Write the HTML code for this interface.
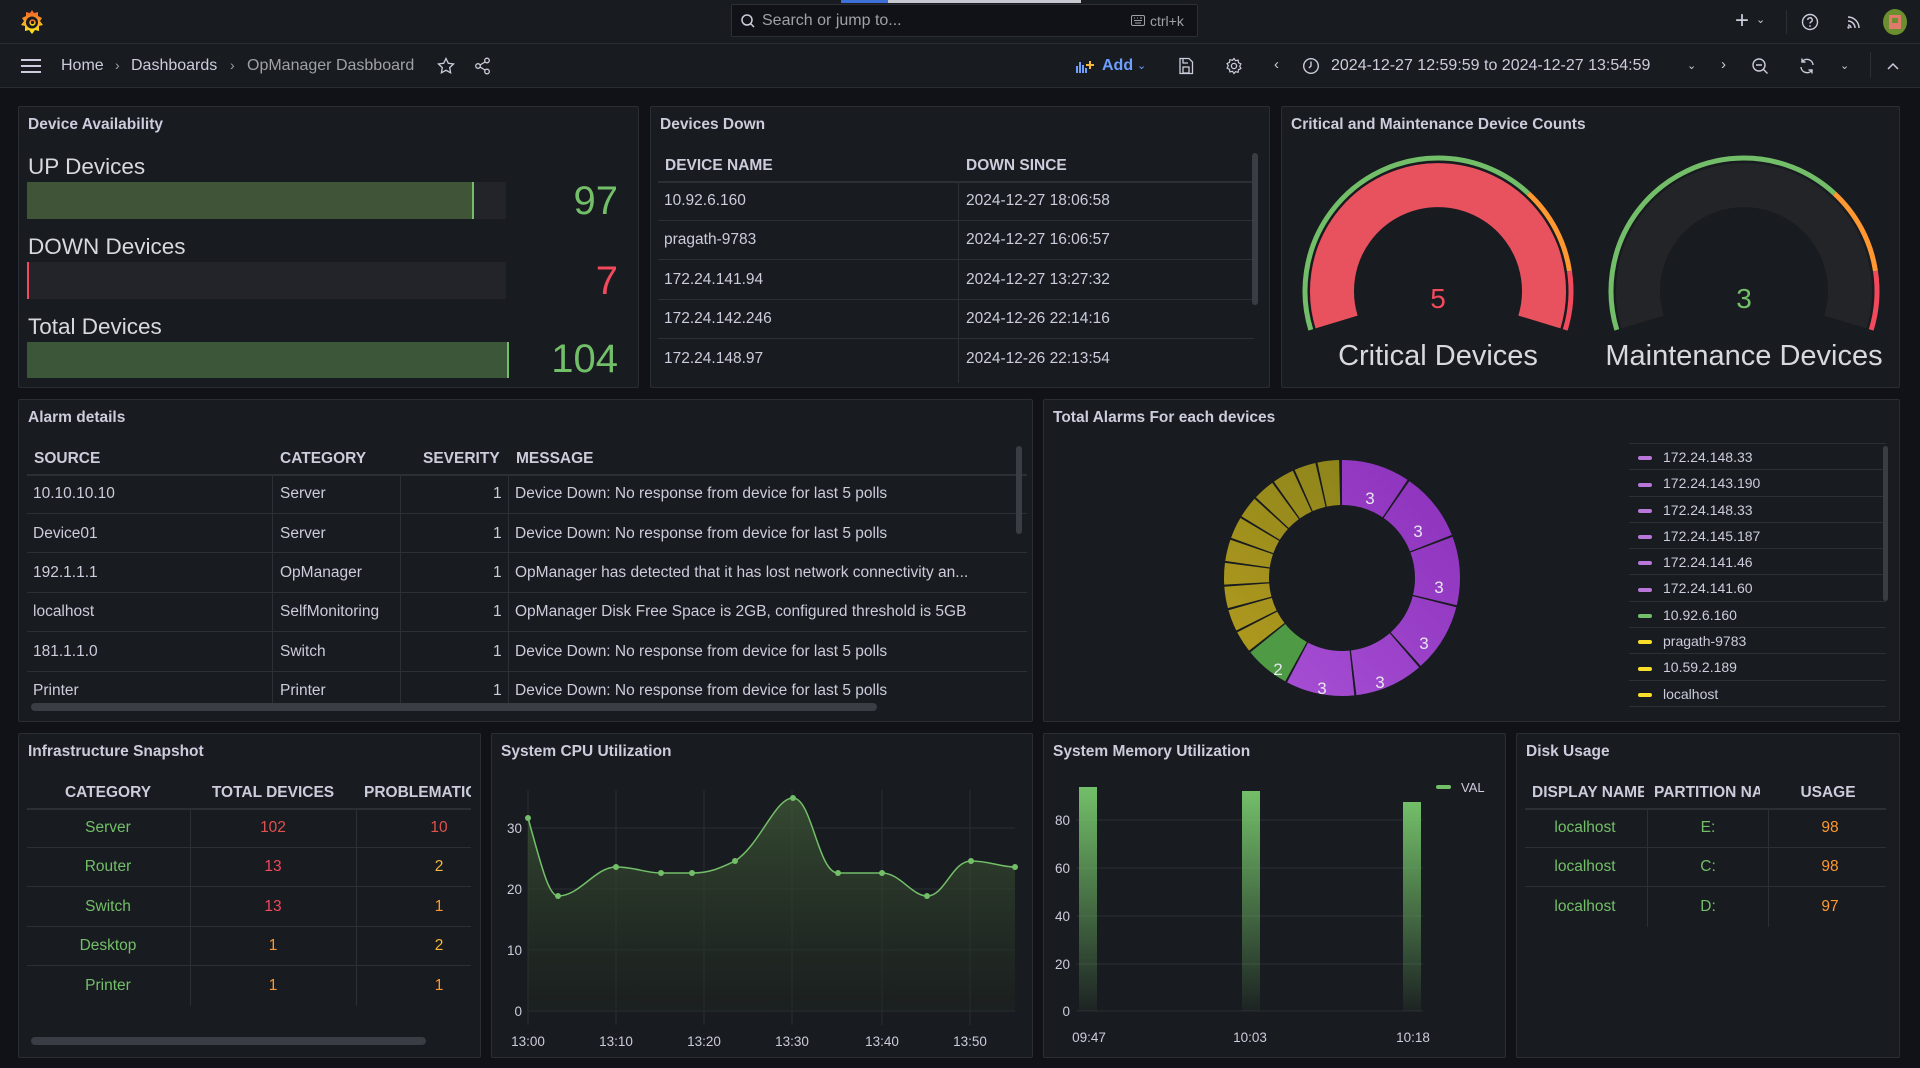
<!DOCTYPE html>
<html><head><meta charset="utf-8">
<style>
*{box-sizing:border-box;margin:0;padding:0}
body{width:1920px;height:1068px;background:#111217;font-family:"Liberation Sans",sans-serif;color:#ccccdc;overflow:hidden;position:relative}
.a{position:absolute;white-space:nowrap}
.panel{position:absolute;background:#181b1f;border:1px solid #2a2d33;border-radius:2px}
.title{position:absolute;left:9px;top:9px;font-size:15.5px;font-weight:bold;color:#ccccdc}
.hl{position:absolute;height:1px;background:#2c2f35}
.vl{position:absolute;width:1px;background:#2c2f35}
.th{position:absolute;font-size:15.5px;font-weight:bold;color:#ccccdc;white-space:nowrap;margin-top:1px}
.td{position:absolute;font-size:15.5px;color:#ccccdc;white-space:nowrap;margin-top:1px}
.g{color:#73bf69}.r{color:#f2495c}.o{color:#ff9830}.y{color:#fade2a}
.c{transform:translateX(-50%)}
</style></head><body>

<!-- top bar -->
<div class="a" style="left:0;top:0;width:1920px;height:44px;background:#181b1f;border-bottom:1px solid #2a2d33"></div>
<div class="a" style="left:841px;top:0;width:47px;height:3px;background:#3d71d9"></div>
<div class="a" style="left:888px;top:0;width:193px;height:3px;background:#c8c8d0"></div>
<svg class="a" style="left:19px;top:8px" width="26" height="28" viewBox="0 0 26 28">
<defs><linearGradient id="lg" x1="0" y1="1" x2="0" y2="0"><stop offset="0" stop-color="#fcee1f"/><stop offset="1" stop-color="#f15b2a"/></linearGradient></defs>
<path d="M13 2 L15 5 L19 4 L19 8 L23 10 L21 13 L24 17 L20 18 L20 23 L16 22 L13 26 L10 22 L6 23 L6 18 L2 17 L5 13 L3 10 L7 8 L7 4 L11 5 Z" fill="url(#lg)"/>
<circle cx="13" cy="14.5" r="6" fill="#181b1f"/><circle cx="13.5" cy="14.5" r="3.2" fill="url(#lg)"/><circle cx="13.5" cy="14.5" r="1.6" fill="#181b1f"/>
</svg>
<div class="a" style="left:731px;top:4px;width:467px;height:33px;background:#111217;border:1px solid #2c2f35;border-radius:2px"></div>
<svg class="a" style="left:740px;top:13px" width="16" height="16" viewBox="0 0 16 16"><circle cx="7" cy="7" r="5" fill="none" stroke="#ccccdc" stroke-width="1.5"/><path d="M10.5 10.5 L14 14" stroke="#ccccdc" stroke-width="1.5"/></svg>
<div class="a" style="left:762px;top:12px;font-size:16px;color:#9fa1a8">Search or jump to...</div>
<svg class="a" style="left:1131px;top:15px" width="14" height="11" viewBox="0 0 14 11"><rect x="0.5" y="0.5" width="13" height="10" rx="1.5" fill="none" stroke="#9fa1a8"/><path d="M3 3h1M6 3h1M9 3h2M3 5.5h8M4 8h6" stroke="#9fa1a8"/></svg>
<div class="a" style="left:1150px;top:13px;font-size:14px;color:#9fa1a8">ctrl+k</div>
<div class="a" style="left:1735px;top:7px;font-size:24px;color:#ccccdc">+</div>
<div class="a" style="left:1756px;top:13px;font-size:11px;color:#ccccdc">&#8964;</div>
<div class="a" style="left:1786px;top:10px;width:1px;height:24px;background:#2c2f35"></div>
<svg class="a" style="left:1801px;top:13px" width="18" height="18" viewBox="0 0 18 18"><circle cx="9" cy="9" r="7.5" fill="none" stroke="#ccccdc" stroke-width="1.4"/><path d="M6.8 7a2.2 2.2 0 1 1 3 2c-.7.3-.8.8-.8 1.5" fill="none" stroke="#ccccdc" stroke-width="1.4"/><circle cx="9" cy="13" r=".9" fill="#ccccdc"/></svg>
<svg class="a" style="left:1845px;top:13px" width="18" height="18" viewBox="0 0 18 18"><path d="M3 4a11 11 0 0 1 11 11M3 8a7 7 0 0 1 7 7M3 12a3 3 0 0 1 3 3" fill="none" stroke="#ccccdc" stroke-width="1.5"/><circle cx="3.5" cy="14.5" r="1.2" fill="#ccccdc"/></svg>
<div class="a" style="left:1883px;top:9px;width:24px;height:26px;border-radius:50%;background:#6b8e2f;overflow:hidden"><div class="a" style="left:6px;top:6px;width:12px;height:14px;background:#e07a6a"></div><div class="a" style="left:9px;top:9px;width:6px;height:5px;background:#6b8e2f"></div></div>

<!-- second bar -->
<div class="a" style="left:0;top:44px;width:1920px;height:44px;background:#181b1f;border-bottom:1px solid #2a2d33"></div>
<svg class="a" style="left:20px;top:58px" width="22" height="16" viewBox="0 0 22 16"><path d="M1 2h20M1 8h20M1 14h20" stroke="#ccccdc" stroke-width="2"/></svg>
<div class="a" style="left:61px;top:57px;font-size:16px;color:#ccccdc">Home</div>
<div class="a" style="left:115px;top:57px;font-size:14px;color:#9fa1a8">›</div>
<div class="a" style="left:131px;top:57px;font-size:16px;color:#ccccdc">Dashboards</div>
<div class="a" style="left:230px;top:57px;font-size:14px;color:#9fa1a8">›</div>
<div class="a" style="left:247px;top:57px;font-size:16px;color:#9fa1a8">OpManager Dasbboard</div>
<svg class="a" style="left:437px;top:57px" width="18" height="18" viewBox="0 0 18 18"><path d="M9 1.5l2.3 4.8 5.2.7-3.8 3.6.9 5.2L9 13.3l-4.6 2.5.9-5.2L1.5 7l5.2-.7z" fill="none" stroke="#ccccdc" stroke-width="1.3"/></svg>
<svg class="a" style="left:474px;top:57px" width="18" height="18" viewBox="0 0 18 18"><circle cx="13" cy="3.5" r="2.3" fill="none" stroke="#ccccdc" stroke-width="1.3"/><circle cx="4" cy="9" r="2.3" fill="none" stroke="#ccccdc" stroke-width="1.3"/><circle cx="13" cy="14.5" r="2.3" fill="none" stroke="#ccccdc" stroke-width="1.3"/><path d="M6 8l5-3M6 10l5 3" stroke="#ccccdc" stroke-width="1.3"/></svg>
<svg class="a" style="left:1075px;top:58px" width="20" height="16" viewBox="0 0 20 16"><path d="M2 15V8M5 15V4M8 15V7M11 15V10" stroke="#6e9fff" stroke-width="2"/><path d="M15 3v8M11 7h8" stroke="#f5b73d" stroke-width="2"/></svg>
<div class="a" style="left:1102px;top:57px;font-size:16px;color:#6e9fff;font-weight:bold">Add</div>
<div class="a" style="left:1137px;top:59px;font-size:11px;color:#6e9fff">&#8964;</div>
<svg class="a" style="left:1178px;top:57px" width="16" height="18" viewBox="0 0 16 18"><path d="M2 1.5h9l3.5 3.5v11.5H2z" fill="none" stroke="#ccccdc" stroke-width="1.3"/><rect x="5" y="10" width="6" height="6" fill="none" stroke="#ccccdc" stroke-width="1.3"/><path d="M5 2v4h5" fill="none" stroke="#ccccdc" stroke-width="1.3"/></svg>
<svg class="a" style="left:1225px;top:57px" width="18" height="18" viewBox="0 0 18 18"><circle cx="9" cy="9" r="2.6" fill="none" stroke="#ccccdc" stroke-width="1.3"/><path d="M9 1.5l1.5 2.2 2.6-.6.4 2.6 2.4 1.2-1.2 2.3 1.2 2.3-2.4 1.2-.4 2.6-2.6-.6L9 16.5l-1.5-2.2-2.6.6-.4-2.6-2.4-1.2 1.2-2.3-1.2-2.3 2.4-1.2.4-2.6 2.6.6z" fill="none" stroke="#ccccdc" stroke-width="1.2"/></svg>
<div class="a" style="left:1274px;top:56px;font-size:15px;color:#ccccdc">‹</div>
<svg class="a" style="left:1302px;top:57px" width="18" height="18" viewBox="0 0 18 18"><circle cx="9" cy="9" r="7.3" fill="none" stroke="#ccccdc" stroke-width="1.4"/><path d="M9 4.5V9l-2 2" fill="none" stroke="#ccccdc" stroke-width="1.4"/></svg>
<div class="a" style="left:1331px;top:57px;font-size:16px;color:#ccccdc">2024-12-27 12:59:59 to 2024-12-27 13:54:59</div>
<div class="a" style="left:1687px;top:59px;font-size:11px;color:#ccccdc">&#8964;</div>
<div class="a" style="left:1721px;top:56px;font-size:15px;color:#ccccdc">›</div>
<svg class="a" style="left:1751px;top:57px" width="18" height="18" viewBox="0 0 18 18"><circle cx="8" cy="8" r="6" fill="none" stroke="#ccccdc" stroke-width="1.4"/><path d="M12.5 12.5L16.5 16.5M5 8h6" stroke="#ccccdc" stroke-width="1.4"/></svg>
<svg class="a" style="left:1798px;top:57px" width="18" height="18" viewBox="0 0 18 18"><path d="M15 8A6 6 0 0 0 4 5M3 10a6 6 0 0 0 11 3" fill="none" stroke="#ccccdc" stroke-width="1.4"/><path d="M4 1.5V5h3.5M14 16.5V13h-3.5" fill="none" stroke="#ccccdc" stroke-width="1.4"/></svg>
<div class="a" style="left:1840px;top:59px;font-size:11px;color:#ccccdc">&#8964;</div>
<div class="a" style="left:1870px;top:52px;width:1px;height:26px;background:#2c2f35"></div>
<svg class="a" style="left:1886px;top:61px" width="14" height="10" viewBox="0 0 14 10"><path d="M2 8l5-5 5 5" fill="none" stroke="#ccccdc" stroke-width="1.5"/></svg>

<!-- Panel: Device Availability -->
<div class="panel" style="left:18px;top:106px;width:621px;height:282px"><div class="title">Device Availability</div></div>
<div class="a" style="left:28px;top:154px;font-size:22.5px;color:#d8d9e0">UP Devices</div>
<div class="a" style="left:27px;top:182px;width:479px;height:37px;background:#222429"></div>
<div class="a" style="left:27px;top:182px;width:447px;height:37px;background:#405438;border-right:2px solid #73bf69"></div>
<div class="a" style="left:540px;top:179px;width:78px;text-align:right;font-size:40px;color:#73bf69">97</div>
<div class="a" style="left:28px;top:234px;font-size:22.5px;color:#d8d9e0">DOWN Devices</div>
<div class="a" style="left:27px;top:262px;width:479px;height:37px;background:#222429;border-left:2px solid #f2495c"></div>
<div class="a" style="left:540px;top:259px;width:78px;text-align:right;font-size:40px;color:#f2495c">7</div>
<div class="a" style="left:28px;top:314px;font-size:22.5px;color:#d8d9e0">Total Devices</div>
<div class="a" style="left:27px;top:342px;width:482px;height:36px;background:#3b5638;border-right:2px solid #73bf69"></div>
<div class="a" style="left:520px;top:337px;width:98px;text-align:right;font-size:40px;color:#73bf69">104</div>

<!-- Panel: Devices Down -->
<div class="panel" style="left:650px;top:106px;width:620px;height:282px"><div class="title">Devices Down</div></div>
<div class="th" style="left:665px;top:156px">DEVICE NAME</div>
<div class="th" style="left:966px;top:156px">DOWN SINCE</div>
<div class="hl" style="left:658px;top:181px;width:596px;height:2px"></div>
<div class="vl" style="left:958px;top:183px;height:200px"></div>
<div class="td" style="left:664px;top:191px">10.92.6.160</div><div class="td" style="left:966px;top:191px">2024-12-27 18:06:58</div>
<div class="hl" style="left:658px;top:220px;width:596px"></div>
<div class="td" style="left:664px;top:230px">pragath-9783</div><div class="td" style="left:966px;top:230px">2024-12-27 16:06:57</div>
<div class="hl" style="left:658px;top:259px;width:596px"></div>
<div class="td" style="left:664px;top:270px">172.24.141.94</div><div class="td" style="left:966px;top:270px">2024-12-27 13:27:32</div>
<div class="hl" style="left:658px;top:299px;width:596px"></div>
<div class="td" style="left:664px;top:309px">172.24.142.246</div><div class="td" style="left:966px;top:309px">2024-12-26 22:14:16</div>
<div class="hl" style="left:658px;top:338px;width:596px"></div>
<div class="td" style="left:664px;top:349px">172.24.148.97</div><div class="td" style="left:966px;top:349px">2024-12-26 22:13:54</div>
<div class="a" style="left:1252px;top:153px;width:6px;height:152px;background:#3a3d44;border-radius:3px"></div>

<!-- Panel: gauges -->
<div class="panel" style="left:1281px;top:106px;width:619px;height:282px"><div class="title">Critical and Maintenance Device Counts</div></div>
<svg class="a" style="left:1281px;top:106px" width="619" height="282" viewBox="1281 106 619 282">
 <g fill="none">
  <path d="M1310.8 329.9 A133 133 0 1 1 1565.2 329.9" pathLength="100" stroke="#73bf69" stroke-width="5" stroke-dasharray="70 200"/>
  <path d="M1310.8 329.9 A133 133 0 1 1 1565.2 329.9" pathLength="100" stroke="#ff9830" stroke-width="5" stroke-dasharray="18 200" stroke-dashoffset="-70"/>
  <path d="M1310.8 329.9 A133 133 0 1 1 1565.2 329.9" pathLength="100" stroke="#f2495c" stroke-width="5" stroke-dasharray="12 200" stroke-dashoffset="-88"/>
  <path d="M1336.6 322 A106 106 0 1 1 1539.4 322" stroke="#e8515e" stroke-width="44"/>
  <path d="M1616.8 329.9 A133 133 0 1 1 1871.2 329.9" pathLength="100" stroke="#73bf69" stroke-width="5" stroke-dasharray="70 200"/>
  <path d="M1616.8 329.9 A133 133 0 1 1 1871.2 329.9" pathLength="100" stroke="#ff9830" stroke-width="5" stroke-dasharray="18 200" stroke-dashoffset="-70"/>
  <path d="M1616.8 329.9 A133 133 0 1 1 1871.2 329.9" pathLength="100" stroke="#f2495c" stroke-width="5" stroke-dasharray="12 200" stroke-dashoffset="-88"/>
  <path d="M1642.6 322 A106 106 0 1 1 1845.4 322" stroke="#232428" stroke-width="44"/>
 </g>
 <text x="1438" y="308" text-anchor="middle" font-size="28" fill="#f2495c" font-family="Liberation Sans">5</text>
 <text x="1744" y="308" text-anchor="middle" font-size="28" fill="#73bf69" font-family="Liberation Sans">3</text>
 <text x="1438" y="365" text-anchor="middle" font-size="29" fill="#d8d9e0" font-family="Liberation Sans">Critical Devices</text>
 <text x="1744" y="365" text-anchor="middle" font-size="29" fill="#d8d9e0" font-family="Liberation Sans">Maintenance Devices</text>
</svg>

<!-- Panel: Alarm details -->
<div class="panel" style="left:18px;top:399px;width:1015px;height:323px"><div class="title">Alarm details</div></div>
<div class="th" style="left:34px;top:449px">SOURCE</div>
<div class="th" style="left:280px;top:449px">CATEGORY</div>
<div class="th" style="left:423px;top:449px">SEVERITY</div>
<div class="th" style="left:516px;top:449px">MESSAGE</div>
<div class="hl" style="left:27px;top:474px;width:1000px;height:2px"></div>
<div class="vl" style="left:272px;top:476px;height:230px"></div>
<div class="vl" style="left:400px;top:476px;height:230px"></div>
<div class="vl" style="left:508px;top:476px;height:230px"></div>
<div class="td" style="left:33px;top:484px">10.10.10.10</div><div class="td" style="left:280px;top:484px">Server</div><div class="td" style="left:493px;top:484px">1</div><div class="td" style="left:515px;top:484px">Device Down: No response from device for last 5 polls</div>
<div class="hl" style="left:27px;top:513px;width:1000px"></div>
<div class="td" style="left:33px;top:524px">Device01</div><div class="td" style="left:280px;top:524px">Server</div><div class="td" style="left:493px;top:524px">1</div><div class="td" style="left:515px;top:524px">Device Down: No response from device for last 5 polls</div>
<div class="hl" style="left:27px;top:552px;width:1000px"></div>
<div class="td" style="left:33px;top:563px">192.1.1.1</div><div class="td" style="left:280px;top:563px">OpManager</div><div class="td" style="left:493px;top:563px">1</div><div class="td" style="left:515px;top:563px">OpManager has detected that it has lost network connectivity an...</div>
<div class="hl" style="left:27px;top:592px;width:1000px"></div>
<div class="td" style="left:33px;top:602px">localhost</div><div class="td" style="left:280px;top:602px">SelfMonitoring</div><div class="td" style="left:493px;top:602px">1</div><div class="td" style="left:515px;top:602px">OpManager Disk Free Space is 2GB, configured threshold is 5GB</div>
<div class="hl" style="left:27px;top:631px;width:1000px"></div>
<div class="td" style="left:33px;top:642px">181.1.1.0</div><div class="td" style="left:280px;top:642px">Switch</div><div class="td" style="left:493px;top:642px">1</div><div class="td" style="left:515px;top:642px">Device Down: No response from device for last 5 polls</div>
<div class="hl" style="left:27px;top:671px;width:1000px"></div>
<div class="td" style="left:33px;top:681px">Printer</div><div class="td" style="left:280px;top:681px">Printer</div><div class="td" style="left:493px;top:681px">1</div><div class="td" style="left:515px;top:681px">Device Down: No response from device for last 5 polls</div>
<div class="a" style="left:31px;top:703px;width:846px;height:8px;background:#3a3d44;border-radius:4px"></div>
<div class="a" style="left:1016px;top:446px;width:6px;height:88px;background:#3a3d44;border-radius:3px"></div>

<!-- Panel: Total Alarms donut -->
<div class="panel" style="left:1043px;top:399px;width:857px;height:323px"><div class="title">Total Alarms For each devices</div></div>
<svg class="a" style="left:1200px;top:440px" width="290" height="280" viewBox="1200 440 290 280">
 <defs>
  <linearGradient id="pg" x1="0" y1="0" x2="1" y2="1"><stop offset="0" stop-color="#a64fd4"/><stop offset="1" stop-color="#8e33bd"/></linearGradient>
  <linearGradient id="yg" x1="0" y1="0" x2="1" y2="1"><stop offset="0" stop-color="#b09a1e"/><stop offset="1" stop-color="#857f1a"/></linearGradient>
 </defs>
 <g transform="rotate(-90 1342 578)" fill="none" stroke-width="45">
  <circle cx="1342" cy="578" r="95.5" pathLength="360" stroke="url(#pg)" stroke-dasharray="33.8 400" stroke-dashoffset="0"/>
  <circle cx="1342" cy="578" r="95.5" pathLength="360" stroke="url(#pg)" stroke-dasharray="33.8 400" stroke-dashoffset="-34.84"/>
  <circle cx="1342" cy="578" r="95.5" pathLength="360" stroke="url(#pg)" stroke-dasharray="33.8 400" stroke-dashoffset="-69.68"/>
  <circle cx="1342" cy="578" r="95.5" pathLength="360" stroke="url(#pg)" stroke-dasharray="33.8 400" stroke-dashoffset="-104.52"/>
  <circle cx="1342" cy="578" r="95.5" pathLength="360" stroke="url(#pg)" stroke-dasharray="33.8 400" stroke-dashoffset="-139.36"/>
  <circle cx="1342" cy="578" r="95.5" pathLength="360" stroke="url(#pg)" stroke-dasharray="33.8 400" stroke-dashoffset="-174.2"/>
  <circle cx="1342" cy="578" r="95.5" pathLength="360" stroke="#4f9a45" stroke-dasharray="22.2 400" stroke-dashoffset="-209.03"/>
  <circle cx="1342" cy="578" r="95.5" pathLength="360" stroke="url(#yg)" stroke-dasharray="10.6 400" stroke-dashoffset="-232.26"/>
  <circle cx="1342" cy="578" r="95.5" pathLength="360" stroke="url(#yg)" stroke-dasharray="10.6 400" stroke-dashoffset="-243.87"/>
  <circle cx="1342" cy="578" r="95.5" pathLength="360" stroke="url(#yg)" stroke-dasharray="10.6 400" stroke-dashoffset="-255.48"/>
  <circle cx="1342" cy="578" r="95.5" pathLength="360" stroke="url(#yg)" stroke-dasharray="10.6 400" stroke-dashoffset="-267.1"/>
  <circle cx="1342" cy="578" r="95.5" pathLength="360" stroke="url(#yg)" stroke-dasharray="10.6 400" stroke-dashoffset="-278.71"/>
  <circle cx="1342" cy="578" r="95.5" pathLength="360" stroke="url(#yg)" stroke-dasharray="10.6 400" stroke-dashoffset="-290.32"/>
  <circle cx="1342" cy="578" r="95.5" pathLength="360" stroke="url(#yg)" stroke-dasharray="10.6 400" stroke-dashoffset="-301.94"/>
  <circle cx="1342" cy="578" r="95.5" pathLength="360" stroke="url(#yg)" stroke-dasharray="10.6 400" stroke-dashoffset="-313.55"/>
  <circle cx="1342" cy="578" r="95.5" pathLength="360" stroke="url(#yg)" stroke-dasharray="10.6 400" stroke-dashoffset="-325.16"/>
  <circle cx="1342" cy="578" r="95.5" pathLength="360" stroke="url(#yg)" stroke-dasharray="10.6 400" stroke-dashoffset="-336.77"/>
  <circle cx="1342" cy="578" r="95.5" pathLength="360" stroke="url(#yg)" stroke-dasharray="10.6 400" stroke-dashoffset="-348.39"/>
 </g>
 <g font-size="17" fill="#e6e6ee" text-anchor="middle" font-family="Liberation Sans">
  <text x="1370" y="504">3</text><text x="1418" y="537">3</text><text x="1439" y="593">3</text>
  <text x="1424" y="649">3</text><text x="1380" y="688">3</text><text x="1322" y="694">3</text><text x="1278" y="675">2</text>
 </g>
</svg>
<div class="hl" style="left:1629px;top:443px;width:257px"></div>
<div class="a" style="left:1629px;top:444px;width:257px;height:266px;overflow:hidden">
 <div style="position:absolute;left:0;top:0;width:257px">
  <div style="height:26.3px;border-bottom:1px solid #2c2f35;font-size:14px;line-height:26px;padding-left:9px"><span style="display:inline-block;width:14px;height:4px;border-radius:2px;background:#b877d9;vertical-align:middle;margin-right:11px"></span>172.24.148.33</div>
  <div style="height:26.3px;border-bottom:1px solid #2c2f35;font-size:14px;line-height:26px;padding-left:9px"><span style="display:inline-block;width:14px;height:4px;border-radius:2px;background:#b877d9;vertical-align:middle;margin-right:11px"></span>172.24.143.190</div>
  <div style="height:26.3px;border-bottom:1px solid #2c2f35;font-size:14px;line-height:26px;padding-left:9px"><span style="display:inline-block;width:14px;height:4px;border-radius:2px;background:#b877d9;vertical-align:middle;margin-right:11px"></span>172.24.148.33</div>
  <div style="height:26.3px;border-bottom:1px solid #2c2f35;font-size:14px;line-height:26px;padding-left:9px"><span style="display:inline-block;width:14px;height:4px;border-radius:2px;background:#b877d9;vertical-align:middle;margin-right:11px"></span>172.24.145.187</div>
  <div style="height:26.3px;border-bottom:1px solid #2c2f35;font-size:14px;line-height:26px;padding-left:9px"><span style="display:inline-block;width:14px;height:4px;border-radius:2px;background:#b877d9;vertical-align:middle;margin-right:11px"></span>172.24.141.46</div>
  <div style="height:26.3px;border-bottom:1px solid #2c2f35;font-size:14px;line-height:26px;padding-left:9px"><span style="display:inline-block;width:14px;height:4px;border-radius:2px;background:#b877d9;vertical-align:middle;margin-right:11px"></span>172.24.141.60</div>
  <div style="height:26.3px;border-bottom:1px solid #2c2f35;font-size:14px;line-height:26px;padding-left:9px"><span style="display:inline-block;width:14px;height:4px;border-radius:2px;background:#73bf69;vertical-align:middle;margin-right:11px"></span>10.92.6.160</div>
  <div style="height:26.3px;border-bottom:1px solid #2c2f35;font-size:14px;line-height:26px;padding-left:9px"><span style="display:inline-block;width:14px;height:4px;border-radius:2px;background:#fade2a;vertical-align:middle;margin-right:11px"></span>pragath-9783</div>
  <div style="height:26.3px;border-bottom:1px solid #2c2f35;font-size:14px;line-height:26px;padding-left:9px"><span style="display:inline-block;width:14px;height:4px;border-radius:2px;background:#fade2a;vertical-align:middle;margin-right:11px"></span>10.59.2.189</div>
  <div style="height:26.3px;border-bottom:1px solid #2c2f35;font-size:14px;line-height:26px;padding-left:9px"><span style="display:inline-block;width:14px;height:4px;border-radius:2px;background:#fade2a;vertical-align:middle;margin-right:11px"></span>localhost</div>
  <div style="height:26.3px;font-size:14px;line-height:26px;padding-left:9px"><span style="display:inline-block;width:14px;height:4px;border-radius:2px;background:#fade2a;vertical-align:middle;margin-right:11px"></span>172.24.141.94</div>
 </div>
</div>
<div class="a" style="left:1883px;top:446px;width:5px;height:155px;background:#3a3d44;border-radius:3px"></div>

<!-- Panel: Infrastructure Snapshot -->
<div class="panel" style="left:18px;top:733px;width:463px;height:325px"><div class="title">Infrastructure Snapshot</div></div>
<div class="th c" style="left:108px;top:783px">CATEGORY</div>
<div class="th c" style="left:273px;top:783px">TOTAL DEVICES</div>
<div class="a" style="left:364px;top:783px;width:107px;overflow:hidden"><div class="th" style="position:static">PROBLEMATIC</div></div>
<div class="hl" style="left:27px;top:808px;width:444px;height:2px"></div>
<div class="vl" style="left:190px;top:810px;height:196px"></div>
<div class="vl" style="left:356px;top:810px;height:196px"></div>
<div class="td c g" style="left:108px;top:818px">Server</div><div class="td c" style="left:273px;top:818px;color:#e0514f">102</div><div class="td c" style="left:439px;top:818px;color:#e0514f">10</div>
<div class="hl" style="left:27px;top:847px;width:444px"></div>
<div class="td c g" style="left:108px;top:857px">Router</div><div class="td c r" style="left:273px;top:857px">13</div><div class="td c" style="left:439px;top:857px;color:#f5b73d">2</div>
<div class="hl" style="left:27px;top:886px;width:444px"></div>
<div class="td c g" style="left:108px;top:897px">Switch</div><div class="td c r" style="left:273px;top:897px">13</div><div class="td c o" style="left:439px;top:897px">1</div>
<div class="hl" style="left:27px;top:926px;width:444px"></div>
<div class="td c g" style="left:108px;top:936px">Desktop</div><div class="td c o" style="left:273px;top:936px">1</div><div class="td c" style="left:439px;top:936px;color:#f5b73d">2</div>
<div class="hl" style="left:27px;top:965px;width:444px"></div>
<div class="td c g" style="left:108px;top:976px">Printer</div><div class="td c o" style="left:273px;top:976px">1</div><div class="td c o" style="left:439px;top:976px">1</div>
<div class="a" style="left:31px;top:1037px;width:395px;height:8px;background:#3a3d44;border-radius:4px"></div>

<!-- Panel: CPU -->
<div class="panel" style="left:491px;top:733px;width:542px;height:325px"><div class="title">System CPU Utilization</div></div>
<svg class="a" style="left:491px;top:733px" width="542" height="325" viewBox="491 733 542 325">
 <defs><linearGradient id="cg" x1="0" y1="0" x2="0" y2="1"><stop offset="0" stop-color="#3f5a37" stop-opacity=".75"/><stop offset="1" stop-color="#1f2620" stop-opacity=".4"/></linearGradient></defs>
 <g stroke="#2a2d33" stroke-width="1">
  <path d="M528 828H1015M528 889H1015M528 950H1015M528 1011H1015"/>
  <path d="M528 790V1025M616 790V1025M704 790V1025M792 790V1025M882 790V1025M970 790V1025"/>
 </g>
 <path d="M528 818 C540 860,548 896,558 896 C580 896,595 867,616 867 C635 867,645 873,661 873 C675 873,680 873,692 873 C710 873,720 868,735 861 C760 845,775 798,793 798 C812 798,818 873,838 873 C855 873,865 873,882 873 C900 873,912 896,927 896 C945 896,952 861,971 861 C990 861,1000 867,1015 867 L1015 1011 L528 1011Z" fill="url(#cg)"/>
 <path d="M528 818 C540 860,548 896,558 896 C580 896,595 867,616 867 C635 867,645 873,661 873 C675 873,680 873,692 873 C710 873,720 868,735 861 C760 845,775 798,793 798 C812 798,818 873,838 873 C855 873,865 873,882 873 C900 873,912 896,927 896 C945 896,952 861,971 861 C990 861,1000 867,1015 867" fill="none" stroke="#73bf69" stroke-width="1.5"/>
 <g fill="#73bf69"><circle cx="528" cy="818" r="3"/><circle cx="558" cy="896" r="3"/><circle cx="616" cy="867" r="3"/><circle cx="661" cy="873" r="3"/><circle cx="692" cy="873" r="3"/><circle cx="735" cy="861" r="3"/><circle cx="793" cy="798" r="3"/><circle cx="838" cy="873" r="3"/><circle cx="882" cy="873" r="3"/><circle cx="927" cy="896" r="3"/><circle cx="971" cy="861" r="3"/><circle cx="1015" cy="867" r="3"/></g>
 <g font-size="13.5" fill="#ccccdc" font-family="Liberation Sans" text-anchor="end">
  <text x="522" y="833">30</text><text x="522" y="894">20</text><text x="522" y="955">10</text><text x="522" y="1016">0</text>
 </g>
 <g font-size="13.5" fill="#ccccdc" font-family="Liberation Sans" text-anchor="middle">
  <text x="528" y="1046">13:00</text><text x="616" y="1046">13:10</text><text x="704" y="1046">13:20</text><text x="792" y="1046">13:30</text><text x="882" y="1046">13:40</text><text x="970" y="1046">13:50</text>
 </g>
</svg>

<!-- Panel: Memory -->
<div class="panel" style="left:1043px;top:733px;width:463px;height:325px"><div class="title">System Memory Utilization</div></div>
<svg class="a" style="left:1043px;top:733px" width="463" height="325" viewBox="1043 733 463 325">
 <defs><linearGradient id="mg" x1="0" y1="0" x2="0" y2="1"><stop offset="0" stop-color="#73bf69"/><stop offset="1" stop-color="#73bf69" stop-opacity=".05"/></linearGradient></defs>
 <g stroke="#2a2d33"><path d="M1076 820H1423M1076 868H1423M1076 916H1423M1076 964H1423M1076 1011H1423"/></g>
 <rect x="1079" y="787" width="18" height="224" fill="url(#mg)"/>
 <rect x="1242" y="791" width="18" height="220" fill="url(#mg)"/>
 <rect x="1403" y="802" width="18" height="209" fill="url(#mg)"/>
 <g font-size="13.5" fill="#ccccdc" font-family="Liberation Sans" text-anchor="end">
  <text x="1070" y="825">80</text><text x="1070" y="873">60</text><text x="1070" y="921">40</text><text x="1070" y="969">20</text><text x="1070" y="1016">0</text>
 </g>
 <g font-size="13.5" fill="#ccccdc" font-family="Liberation Sans" text-anchor="middle">
  <text x="1089" y="1042">09:47</text><text x="1250" y="1042">10:03</text><text x="1413" y="1042">10:18</text>
 </g>
 <rect x="1436" y="785" width="15" height="4" rx="2" fill="#73bf69"/>
 <text x="1461" y="792" font-size="13" fill="#ccccdc" font-family="Liberation Sans">VAL</text>
</svg>

<!-- Panel: Disk Usage -->
<div class="panel" style="left:1516px;top:733px;width:384px;height:325px"><div class="title">Disk Usage</div></div>
<div class="a" style="left:1532px;top:783px;width:112px;overflow:hidden"><div class="th" style="position:static">DISPLAY NAME</div></div>
<div class="a" style="left:1654px;top:783px;width:106px;overflow:hidden"><div class="th" style="position:static">PARTITION NAME</div></div>
<div class="th c" style="left:1828px;top:783px">USAGE</div>
<div class="hl" style="left:1525px;top:808px;width:361px;height:2px"></div>
<div class="vl" style="left:1647px;top:810px;height:117px"></div>
<div class="vl" style="left:1768px;top:810px;height:117px"></div>
<div class="td c g" style="left:1585px;top:818px">localhost</div><div class="td c g" style="left:1708px;top:818px">E:</div><div class="td c o" style="left:1830px;top:818px">98</div>
<div class="hl" style="left:1525px;top:847px;width:361px"></div>
<div class="td c g" style="left:1585px;top:857px">localhost</div><div class="td c g" style="left:1708px;top:857px">C:</div><div class="td c o" style="left:1830px;top:857px">98</div>
<div class="hl" style="left:1525px;top:886px;width:361px"></div>
<div class="td c g" style="left:1585px;top:897px">localhost</div><div class="td c g" style="left:1708px;top:897px">D:</div><div class="td c o" style="left:1830px;top:897px">97</div>

</body></html>
